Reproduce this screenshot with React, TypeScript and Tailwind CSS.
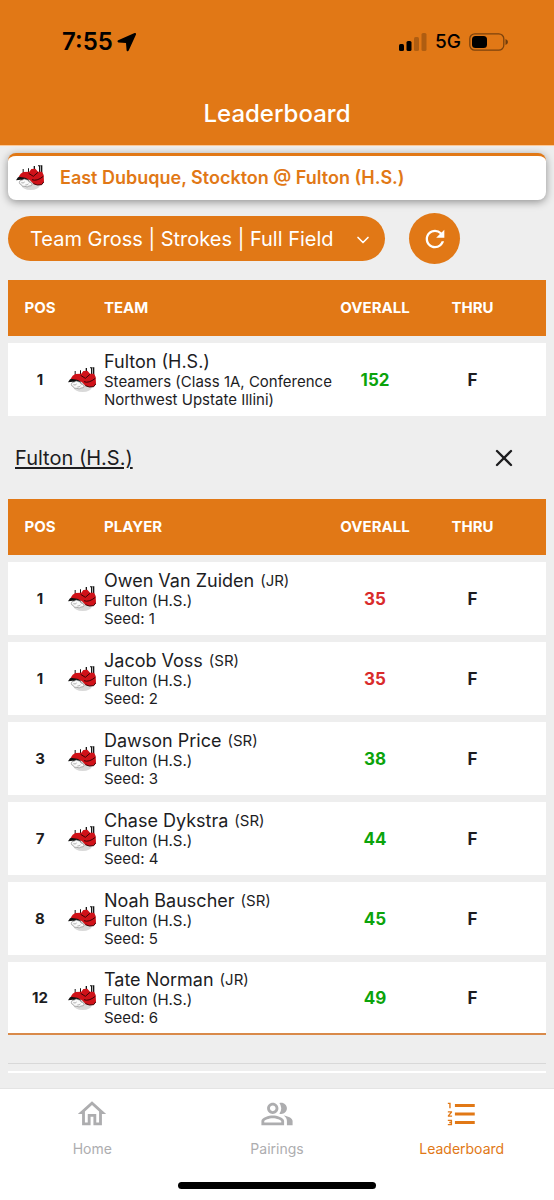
import { useState } from "react";
import type { ReactNode } from "react";
import { X, ChevronDown } from "lucide-react";
import {
  MdFormatListNumbered,
  MdOutlineHome,
  MdOutlinePeopleAlt,
  MdRefresh,
} from "react-icons/md";

type Row = {
  pos: number;
  name: string;
  grade?: string;
  lines: string[];
  overall: number;
  under?: boolean;
  thru: string;
};

const teams: Row[] = [
  {
    pos: 1,
    name: "Fulton (H.S.)",
    lines: ["Steamers (Class 1A, Conference Northwest Upstate Illini)"],
    overall: 152,
    thru: "F",
  },
];

const players: Row[] = [
  { pos: 1, name: "Owen Van Zuiden", grade: "JR", lines: ["Fulton (H.S.)", "Seed: 1"], overall: 35, under: true, thru: "F" },
  { pos: 1, name: "Jacob Voss", grade: "SR", lines: ["Fulton (H.S.)", "Seed: 2"], overall: 35, under: true, thru: "F" },
  { pos: 3, name: "Dawson Price", grade: "SR", lines: ["Fulton (H.S.)", "Seed: 3"], overall: 38, thru: "F" },
  { pos: 7, name: "Chase Dykstra", grade: "SR", lines: ["Fulton (H.S.)", "Seed: 4"], overall: 44, thru: "F" },
  { pos: 8, name: "Noah Bauscher", grade: "SR", lines: ["Fulton (H.S.)", "Seed: 5"], overall: 45, thru: "F" },
  { pos: 12, name: "Tate Norman", grade: "JR", lines: ["Fulton (H.S.)", "Seed: 6"], overall: 49, thru: "F" },
];

function TeamLogo() {
  return (
    <svg viewBox="0 0 84 76" className="w-7 shrink-0" aria-hidden="true">
      <ellipse cx="44" cy="59" rx="28" ry="16" fill="#d9d9d9" />
      <path d="M0 46Q4 36 14 32L36 38 40 50 14 44Z" fill="#111" />
      <path d="M20 12h3v16h-3zM36 10h3v14h-3zM53 3h4v20h-4zM69 1h4v28h-4zM75 1h4v28h-4zM66 1h8v3h-8z" fill="#161616" />
      <path d="M8 35 14 26 22 21 40 20 46 12 58 11 66 20 78 20 83 30 84 50 77 59 64 60 52 56 42 46 28 38Z" fill="#cf1219" />
      <path d="M38 25 52 34 66 22M48 44Q62 50 82 34M52 56 64 60 77 59 84 50" fill="none" stroke="#3a0406" strokeWidth="3" />
      <path d="M10 52q0-7 9-7 5-5 12-1 8 0 8 7 9 0 9 7 0 6-9 5-5 5-12 1-10 2-11-5-6-1-6-7z" fill="#fafafa" stroke="#888" strokeWidth="2" />
      <path d="M16 53q6 3 10-2M28 60q8 1 9-4" fill="none" stroke="#888" strokeWidth="2" />
    </svg>
  );
}

function StatusBar() {
  return (
    <div className="flex items-center justify-between pt-[26px] pr-[46px] pl-[62px] text-black">
      <div className="flex h-8 items-center gap-1">
        <span className="text-2xl font-semibold">7:55</span>
        <svg viewBox="0 0 20 20" className="size-5" aria-hidden="true">
          <path d="M17.6 1 1.2 8.2Q-.4 9.4 1.4 10.4L9 11 9.6 18.4Q10.6 20.2 11.7 18.6L19 2.6Q19.4.6 17.6 1Z" />
        </svg>
      </div>
      <div className="flex h-8 items-center gap-2">
        <svg viewBox="0 0 28 18" className="h-[18px] w-7" aria-hidden="true">
          <rect x="0" y="11" width="5" height="7" rx="1.5" />
          <rect x="7.5" y="8" width="5" height="10" rx="1.5" />
          <rect x="15" y="4" width="5" height="14" rx="1.5" opacity=".22" />
          <rect x="22.5" y="0" width="5" height="18" rx="1.5" opacity=".22" />
        </svg>
        <span className="text-[19px] font-medium">5G</span>
        <svg viewBox="0 0 39 18" className="h-[18px] w-[39px]" aria-hidden="true">
          <rect x=".8" y=".8" width="34" height="16.4" rx="5" fill="none" stroke="#000" strokeOpacity=".45" strokeWidth="1.3" />
          <rect x="3" y="3" width="15" height="12" rx="3.5" />
          <path d="M36.5 6q2.5 1 2.5 3t-2.5 3z" opacity=".5" />
        </svg>
      </div>
    </div>
  );
}

function ScoreTable({ label, rows, underlined }: { label: string; rows: Row[]; underlined?: boolean }) {
  return (
    <table className="w-full table-fixed border-separate border-spacing-x-0 border-spacing-y-[7px]">
      <thead>
        <tr className="h-14 bg-[#e17816] text-[15px] font-bold text-white">
          <th scope="col" className="w-[60px] pl-1">POS</th>
          <th scope="col" className="pl-9 text-left">{label}</th>
          <th scope="col" className="w-20">OVERALL</th>
          <th scope="col" className="w-[131px] pr-4">THRU</th>
        </tr>
      </thead>
      <tbody>
        {rows.map((row) => (
          <tr
            key={row.name}
            className={`h-[73px] bg-white ${underlined ? "last:[&>td]:border-b-2 last:[&>td]:border-[#d98a4a]" : ""}`}
          >
            <td className="pt-0.5 pl-1 text-center text-[15px] font-bold">{row.pos}</td>
            <td className="p-0">
              <div className="flex items-center gap-2">
                <TeamLogo />
                <div className="min-w-0 text-[15px] leading-[18px]">
                  <div className="flex gap-1.5 leading-[22px]">
                    <span className="text-lg leading-[22px]">{row.name}</span>
                    {row.grade && <span>({row.grade})</span>}
                  </div>
                  {row.lines.map((line) => (
                    <div key={line}>{line}</div>
                  ))}
                </div>
              </div>
            </td>
            <td className={`pt-0.5 text-center text-[17px] font-bold ${row.under ? "text-[#d92b2b]" : "text-[#0ba30b]"}`}>
              {row.overall}
            </td>
            <td className="pt-0.5 pr-4 text-center text-[17px] font-bold">{row.thru}</td>
          </tr>
        ))}
      </tbody>
    </table>
  );
}

function Tab({ icon, label, active }: { icon: ReactNode; label: string; active?: boolean }) {
  return (
    <a
      href="#"
      className={`flex flex-1 flex-col items-center gap-2 text-sm ${active ? "text-[#e17816]" : "text-[#adadaf]"}`}
      aria-current={active ? "page" : undefined}
    >
      {icon}
      <span>{label}</span>
    </a>
  );
}

export default function App() {
  const [open, setOpen] = useState(true);

  return (
    <div className="flex min-h-screen flex-col bg-[#eee] font-['Inter',sans-serif] text-[#1d1d1f]">
      <header className="h-[146px] border-b border-[#fdc997] bg-[#e17816]">
        <StatusBar />
        <h1 className="pt-10 text-center text-2xl leading-8 font-medium text-white">Leaderboard</h1>
      </header>

      <main className="px-2">
        <div className="mt-[7px] flex h-[47px] items-center gap-4 rounded-lg border-t-3 border-[#e17816] bg-white px-2 shadow-[0_2px_8px_rgba(0,0,0,0.4)]">
          <TeamLogo />
          <h2 className="text-lg font-semibold text-[#e17816]">East Dubuque, Stockton @ Fulton (H.S.)</h2>
        </div>

        <div className="mt-[13px] flex items-center gap-6">
          <div className="relative">
            <select
              aria-label="Leaderboard view"
              className="h-[45px] w-[377px] appearance-none rounded-full bg-[#e17816] pl-[22px] text-xl text-white"
            >
              <option>Team Gross | Strokes | Full Field</option>
            </select>
            <ChevronDown className="pointer-events-none absolute top-[14px] right-3 size-5 text-white" strokeWidth={2} />
          </div>
          <button
            type="button"
            aria-label="Refresh"
            className="flex size-[51px] items-center justify-center rounded-full bg-[#e17816] text-white"
          >
            <MdRefresh className="size-7" />
          </button>
        </div>

        <div className="mt-[9px]">
          <ScoreTable label="TEAM" rows={teams} />
        </div>

        {open && (
          <section>
            <div className="flex h-[69px] items-center justify-between pr-7 pl-[7px]">
              <a href="#" className="text-xl underline underline-offset-2">Fulton (H.S.)</a>
              <button type="button" aria-label="Close" onClick={() => setOpen(false)}>
                <X className="size-7" strokeWidth={2} />
              </button>
            </div>
            <ScoreTable label="PLAYER" rows={players} underlined />
          </section>
        )}

        <div className="mt-[21px] mb-[15px] h-[10px] border-t border-b-2 border-t-[#d8d8d8] border-b-white" />
      </main>

      <div className="mt-auto border-t border-[#e4e4e4] bg-white">
        <nav className="flex pt-2">
          <Tab icon={<MdOutlineHome className="size-[34px]" />} label="Home" />
          <Tab icon={<MdOutlinePeopleAlt className="size-[34px]" />} label="Pairings" />
          <Tab icon={<MdFormatListNumbered className="size-[34px]" />} label="Leaderboard" active />
        </nav>
        <div className="mx-auto mt-[23px] mb-3 h-[7px] w-[198px] rounded-full bg-black" />
      </div>
    </div>
  );
}
